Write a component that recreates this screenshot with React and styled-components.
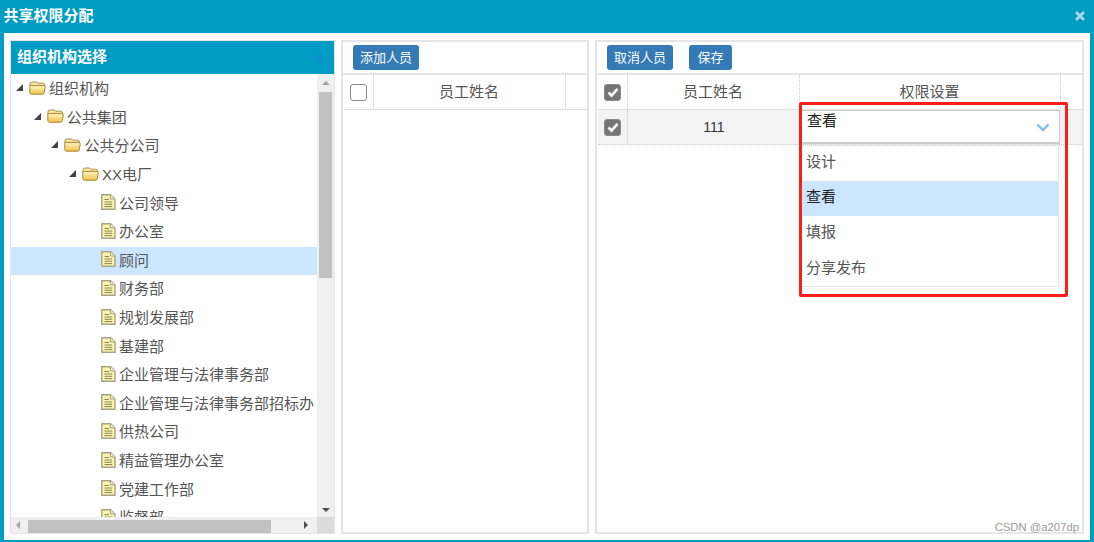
import React from "react"
import styled, { createGlobalStyle } from "styled-components"

const GlobalStyle = createGlobalStyle`
    html, body {
        margin: 0;
        padding: 0;
        background: #009cc3;
    }
    body {
        font-family: "Liberation Sans", "Noto Sans CJK SC", sans-serif;
        font-size: 15px;
        color: #555;
    }
`

const FolderIcon = () => (
    <svg width="17" height="14" viewBox="0 0 17 14">
        <defs>
            <linearGradient id="folderBody" x1="0" y1="0" x2="0" y2="1">
                <stop offset="0" stopColor="#fff6c0" />
                <stop offset="1" stopColor="#eec24e" />
            </linearGradient>
        </defs>
        <path d="M.8 4 Q.8 1 3 1 L7 1 Q8 1 8.6 2.2 L13.5 2.2 Q15.6 2.2 15.6 4.5 L15.6 5 L.8 5 Z" fill="#fbe9a8" stroke="#ad8c4a" />
        <path d="M.8 11.2 L.8 5.6 Q.8 4.4 2.4 4.4 L14.6 4.4 Q16.6 4.4 16.2 6.2 L15.2 11.8 Q15 13.2 13.4 13.2 L2.6 13.2 Q.8 13.2 .8 11.2 Z" fill="url(#folderBody)" stroke="#a98632" />
    </svg>
)

const DocIcon = () => (
    <svg width="15" height="16" viewBox="0 0 15 16">
        <path d="M.8 .8 L9.6 .8 L14 5 L14 15.2 L.8 15.2 Z" fill="#fdf6a6" stroke="#a7a28c" strokeWidth="1.4" />
        <path d="M9.4 .8 L9.4 5 L14 5" fill="#ece8cc" stroke="#a7a28c" />
        <path d="M3.5 5.5 H8 M3.5 8 H11.2 M3.5 10.3 H11.2 M3.5 12.6 H11.2" stroke="#86825f" />
    </svg>
)

const CheckBox = ({ checked }) => (
    <Check checked={ checked }>
        { checked && (
            <svg width="12" height="11" viewBox="0 0 12 11">
                <path d="M1.5 5.5 L4.6 8.6 L10.5 1.8" fill="none" stroke="#fff" strokeWidth="2.6" />
            </svg>
        ) }
    </Check>
)

const treeRows = [
    { label: "组织机构", level: 0, folder: true },
    { label: "公共集团", level: 1, folder: true },
    { label: "公共分公司", level: 2, folder: true },
    { label: "XX电厂", level: 3, folder: true },
    { label: "公司领导" },
    { label: "办公室" },
    { label: "顾问", selected: true },
    { label: "财务部" },
    { label: "规划发展部" },
    { label: "基建部" },
    { label: "企业管理与法律事务部" },
    { label: "企业管理与法律事务部招标办" },
    { label: "供热公司" },
    { label: "精益管理办公室" },
    { label: "党建工作部" },
    { label: "监督部" },
]

const options = [
    { label: "设计" },
    { label: "查看", active: true },
    { label: "填报" },
    { label: "分享发布" },
]

const App = () => {
    return (
        <Page>
            <GlobalStyle />
            <TitleBar>
                <Title>共享权限分配</Title>
                <CloseIcon width="10" height="10" viewBox="0 0 10 10">
                    <path d="M1 1 L9 9 M9 1 L1 9" stroke="#a9dcea" strokeWidth="2.6" />
                </CloseIcon>
            </TitleBar>
            <Content>
                <TreePanel>
                    <TreeHeader>
                        组织机构选择
                        <svg width="11" height="11" viewBox="0 0 11 11">
                            <path d="M5 1 L1.5 5.5 L5 10 M10 1 L6.5 5.5 L10 10" fill="none" stroke="#0e8fd2" strokeWidth="2.2" />
                        </svg>
                    </TreeHeader>
                    <TreeBody>
                        <TreeView>
                            <TreeList>
                                { treeRows.map((row) => (
                                    <TreeRow key={ row.label } selected={ row.selected } level={ row.level } folder={ row.folder }>
                                        { row.folder && <Arrow /> }
                                        { row.folder ? <FolderIcon /> : <DocIcon /> }
                                        <TreeLabel>{ row.label }</TreeLabel>
                                    </TreeRow>
                                )) }
                            </TreeList>
                            <VerticalBar>
                                <ArrowUp />
                                <VerticalThumb />
                                <Spacer />
                                <ArrowDown />
                            </VerticalBar>
                        </TreeView>
                        <HorizontalBar>
                            <ArrowLeft />
                            <HorizontalThumb />
                            <Spacer />
                            <ArrowRight />
                            <Corner />
                        </HorizontalBar>
                    </TreeBody>
                </TreePanel>

                <MiddlePanel>
                    <Toolbar>
                        <Button>添加人员</Button>
                    </Toolbar>
                    <HeadRow columns="30px 192px 20px">
                        <CheckCell><CheckBox /></CheckCell>
                        <HeadCell>员工姓名</HeadCell>
                        <HeadCell />
                    </HeadRow>
                </MiddlePanel>

                <RightPanel>
                    <Toolbar>
                        <Button>取消人员</Button>
                        <Button>保存</Button>
                    </Toolbar>
                    <HeadRow columns="30px 172px 261px 21px">
                        <CheckCell><CheckBox checked /></CheckCell>
                        <HeadCell>员工姓名</HeadCell>
                        <HeadCell>权限设置</HeadCell>
                        <HeadCell />
                    </HeadRow>
                    <DataRow>
                        <CheckCell><CheckBox checked /></CheckCell>
                        <NameCell>111</NameCell>
                        <SelectCell>
                            <Select>
                                <SelectValue>查看</SelectValue>
                                <Chevron width="14" height="9" viewBox="0 0 14 9">
                                    <path d="M1.5 1.5 L7 7 L12.5 1.5" fill="none" stroke="#7cc0ee" strokeWidth="2.4" />
                                </Chevron>
                            </Select>
                            <Menu>
                                { options.map((option) => (
                                    <MenuItem key={ option.label } active={ option.active }>
                                        { option.label }
                                    </MenuItem>
                                )) }
                            </Menu>
                            <RedMark />
                        </SelectCell>
                    </DataRow>
                    <Watermark>CSDN @a207dp</Watermark>
                </RightPanel>
            </Content>
        </Page>
    )
}

const Page = styled.div`
    width: 1094px;
    height: 542px;
    display: flex;
    flex-direction: column;
    background: #009cc3;
    overflow: hidden;
`

const TitleBar = styled.div`
    height: 33px;
    flex: none;
    display: flex;
    align-items: center;
    justify-content: space-between;
    padding: 0 9px 5px 3.5px;
    box-sizing: border-box;
`

const Title = styled.div`
    font-size: 15px;
    font-weight: bold;
    color: #fff;
`

const CloseIcon = styled.svg`
    display: block;
    margin-top: 4px;
`

const Content = styled.div`
    flex: none;
    height: 507px;
    margin: 0 4px;
    padding: 7px 6px 6px;
    box-sizing: border-box;
    background: #fff;
    display: flex;
    gap: 6px;
`

const TreePanel = styled.div`
    width: 325px;
    border: 1px solid #e5e5e5;
    box-sizing: border-box;
    display: flex;
    flex-direction: column;
`

const TreeHeader = styled.div`
    height: 33px;
    flex: none;
    background: #009cc3;
    color: #fff;
    font-weight: bold;
    font-size: 15px;
    display: flex;
    align-items: center;
    justify-content: space-between;
    box-sizing: border-box;
    padding: 0 9px 4px 6px;
    svg {
        margin-top: 4px;
    }
`

const TreeBody = styled.div`
    flex: 1;
    min-height: 0;
    display: flex;
    flex-direction: column;
`

const TreeView = styled.div`
    flex: 1;
    min-height: 0;
    display: flex;
`

const TreeList = styled.div`
    flex: 1;
    min-width: 0;
    padding-top: 1px;
    overflow: hidden;
`

const TreeRow = styled.div`
    height: 28.6px;
    box-sizing: border-box;
    display: flex;
    align-items: center;
    white-space: nowrap;
    overflow: hidden;
    background: ${ props => props.selected ? "#cce6ff" : "transparent" };
    padding-left: ${ props => props.folder ? 5 + props.level * 17.7 : 90 }px;
    padding-bottom: 3px;
`

const Arrow = styled.span`
    width: 0;
    height: 0;
    margin-right: 6px;
    border-style: solid;
    border-width: 0 0 7px 7px;
    border-color: transparent transparent #444 transparent;
`

const TreeLabel = styled.span`
    margin-left: 3px;
    color: #555;
    font-size: 15px;
`

const VerticalBar = styled.div`
    width: 17px;
    flex: none;
    background: #f0f0f0;
    display: flex;
    flex-direction: column;
    align-items: center;
`

const Spacer = styled.div`
    flex: 1;
`

const VerticalThumb = styled.div`
    width: 13px;
    height: 186px;
    background: #c1c1c1;
`

const ArrowUp = styled.span`
    width: 0;
    height: 0;
    margin: 7px 0 7px;
    border-style: solid;
    border-width: 0 4px 4px;
    border-color: transparent transparent #a3a3a3;
`

const ArrowDown = styled.span`
    width: 0;
    height: 0;
    margin: 0 0 5px;
    border-style: solid;
    border-width: 4px 4px 0;
    border-color: #505050 transparent transparent;
`

const HorizontalBar = styled.div`
    height: 16px;
    flex: none;
    background: #f0f0f0;
    display: flex;
    align-items: center;
`

const HorizontalThumb = styled.div`
    width: 243px;
    height: 13px;
    margin-top: 2px;
    background: #c1c1c1;
`

const ArrowLeft = styled.span`
    width: 0;
    height: 0;
    margin: 0 8px 0 5px;
    border-style: solid;
    border-width: 4px 4px 4px 0;
    border-color: transparent #a3a3a3 transparent transparent;
`

const ArrowRight = styled.span`
    width: 0;
    height: 0;
    margin-right: 9px;
    border-style: solid;
    border-width: 4px 0 4px 4px;
    border-color: transparent transparent transparent #505050;
`

const Corner = styled.div`
    width: 17px;
    height: 16px;
    background: #dcdcdc;
`

const MiddlePanel = styled.div`
    width: 248px;
    border: 2px solid #e5e5e5;
    box-sizing: border-box;
    position: relative;
`

const RightPanel = styled(MiddlePanel)`
    width: 489px;
`

const Toolbar = styled.div`
    height: 31px;
    display: flex;
    align-items: center;
    gap: 16px;
    padding-left: 10px;
    border-bottom: 2px solid #e5e5e5;
`

const Button = styled.div`
    height: 25px;
    min-width: 43px;
    padding: 0 7px 2px;
    box-sizing: border-box;
    display: flex;
    align-items: center;
    justify-content: center;
    background: #337ab7;
    border-radius: 3px;
    color: #fff;
    font-size: 13px;
`

const HeadRow = styled.div`
    height: 34px;
    margin-left: 1px;
    display: grid;
    grid-template-columns: ${ props => props.columns };
    border-bottom: 1px solid #e0e0e0;
`

const CheckCell = styled.div`
    display: flex;
    align-items: center;
    justify-content: center;
    border-right: 1px dotted #ccc;
    box-sizing: border-box;
`

const Check = styled.span`
    width: 17px;
    height: 17px;
    box-sizing: border-box;
    display: flex;
    align-items: center;
    justify-content: center;
    border-radius: 3px;
    border: 1px solid #8a8a8a;
    background: ${ props => props.checked ? "#757575" : "#fff" };
`

const HeadCell = styled.div`
    display: flex;
    align-items: center;
    justify-content: center;
    border-right: 1px dotted #ccc;
    box-sizing: border-box;
    padding: 0 1px 4px 0;
    font-size: 15px;
    &:last-child {
        border-right: none;
    }
`

const DataRow = styled.div`
    height: 35px;
    margin: 0 1px;
    display: grid;
    grid-template-columns: 30px 172px 261px;
    width: 484px;
    background: #f3f3f3;
    border-bottom: 1px dotted #ccc;
    box-sizing: border-box;
`

const NameCell = styled.div`
    display: flex;
    align-items: center;
    justify-content: center;
    font-size: 14px;
    color: #333;
`

const SelectCell = styled.div`
    position: relative;
`

const Select = styled.div`
    height: 34px;
    width: 259px;
    margin-left: 1px;
    box-sizing: border-box;
    background: #fff;
    border: 1px solid #ccc;
    border-bottom-width: 2px;
    display: flex;
    justify-content: space-between;
    padding: 1px 9px 0 5px;
`

const SelectValue = styled.span`
    color: #222;
    font-size: 15px;
    line-height: 18px;
`

const Chevron = styled.svg`
    display: block;
    margin-top: 11px;
`

const Menu = styled.div`
    position: absolute;
    top: 35px;
    left: 2px;
    width: 257px;
    box-sizing: border-box;
    background: #fff;
    border: 1px solid #e5e5e5;
    border-left: none;
    z-index: 2;
`

const MenuItem = styled.div`
    height: 35px;
    box-sizing: border-box;
    display: flex;
    align-items: center;
    padding: 0 0 6px 4px;
    background: ${ props => props.active ? "#cce6ff" : "#fff" };
    color: ${ props => props.active ? "#222" : "#555" };
    &:last-child {
        padding-bottom: 4px;
    }
`

const RedMark = styled.div`
    position: absolute;
    top: -8px;
    left: -1px;
    width: 269px;
    height: 195px;
    box-sizing: border-box;
    border: 3px solid #fb1f17;
    border-radius: 2px;
    z-index: 3;
`

const Watermark = styled.div`
    position: absolute;
    right: 3px;
    bottom: -1px;
    font-size: 11.3px;
    color: #9a9a9a;
`

export default App
